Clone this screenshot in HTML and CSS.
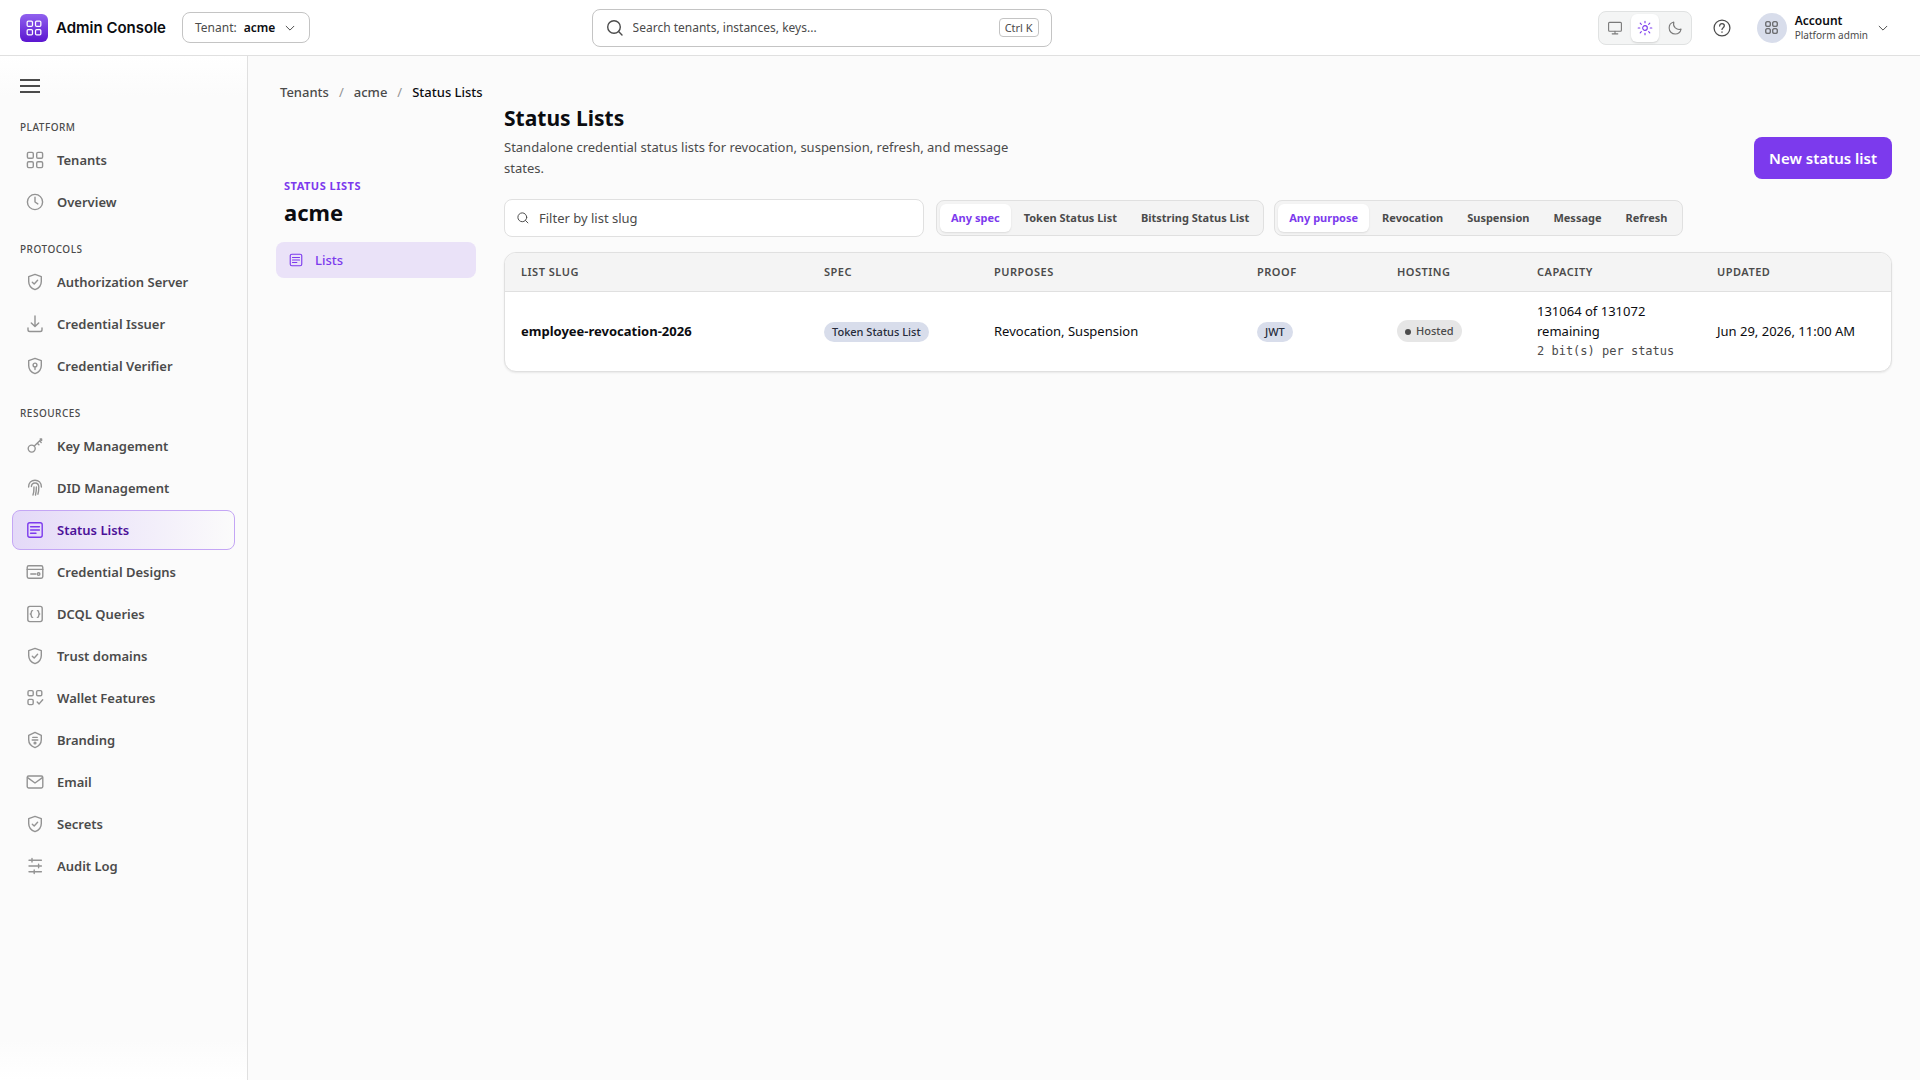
FILE: index.html
```html
<!DOCTYPE html>
<html lang="en">
<head>
    <meta charset="UTF-8">
    <meta name="viewport" content="width=device-width, initial-scale=1.0">
    <title>Status Lists - Admin Console</title>
    <link rel="stylesheet" href="styles.css">
</head>
<body>
    <!-- Icon sprite -->
    <svg class="sprite" aria-hidden="true">
        <symbol id="i-grid" viewBox="0 0 20 20"><rect x="2.4" y="2.4" width="5.9" height="5.9" rx="1.3"/><rect x="11.7" y="2.4" width="5.9" height="5.9" rx="1.3"/><rect x="2.4" y="11.7" width="5.9" height="5.9" rx="1.3"/><rect x="11.7" y="11.7" width="5.9" height="5.9" rx="1.3"/></symbol>
        <symbol id="i-clock" viewBox="0 0 20 20"><circle cx="10" cy="10" r="7.6"/><path d="M10 5.2V10l2.8 1.9"/></symbol>
        <symbol id="i-shield" viewBox="0 0 20 20"><path d="M10 2.4l6.3 2.2v4.8c0 4-2.4 6.8-6.3 8.2-3.9-1.4-6.3-4.2-6.3-8.2V4.6z"/><path d="M7.3 10.2l1.9 1.8 3.4-3.7"/></symbol>
        <symbol id="i-download" viewBox="0 0 20 20"><path d="M10 2v10.4M6.3 8.9l3.7 3.7 3.7-3.7M3 14v1.7c0 1 .8 1.8 1.8 1.8h10.4c1 0 1.8-.8 1.8-1.8V14"/></symbol>
        <symbol id="i-verify" viewBox="0 0 20 20"><path d="M10 2.4l6.3 2.2v4.8c0 4-2.4 6.8-6.3 8.2-3.9-1.4-6.3-4.2-6.3-8.2V4.6z"/><circle cx="10" cy="9" r="1.9"/><path d="M10 11v2.6"/></symbol>
        <symbol id="i-key" viewBox="0 0 20 20"><circle cx="6.7" cy="12.6" r="3.5"/><path d="M9.3 10l7-6.8M12.3 7.2l1.6 1.6M14.6 4.8l1.6 1.6M15.2 3h1.4v1.4"/></symbol>
        <symbol id="i-finger" viewBox="0 0 20 20"><path d="M3.6 9C3.6 4.8 6.4 2.2 10 2.2s6.4 2.6 6.4 6.8M6.4 8.6C6.4 6.4 7.8 5 10 5s3.8 1.600 3.800 4.200c0 3-.2 5-.9 7M8 17c.8-2.200 1-4.600 1-8M11.400 9c0 3.400-.2 5.400-.9 8"/></symbol>
        <symbol id="i-list" viewBox="0 0 20 20"><rect x="2.8" y="2.8" width="14.4" height="14.4" rx="2"/><path d="M5.6 6.8h8.8M5.6 10h8.8M5.6 13.2h5.4"/></symbol>
        <symbol id="i-card" viewBox="0 0 20 20"><rect x="2.2" y="3.8" width="15.6" height="12.4" rx="1.6"/><path d="M2.2 7.4h15.6M5.8 12h5"/><circle cx="13.6" cy="12" r="1.3"/></symbol>
        <symbol id="i-braces" viewBox="0 0 20 20"><rect x="2.8" y="2.4" width="14.4" height="15.2" rx="2"/><path d="M7.6 6.6c-1.3 0-1.3.6-1.3 1.7s-.2 1.7-1 1.7c.8 0 1 .6 1 1.7s0 1.7 1.3 1.7M12.4 6.6c1.3 0 1.3.6 1.3 1.7s.2 1.7 1 1.7c-.8 0-1 .6-1 1.7s0 1.7-1.3 1.7"/></symbol>
        <symbol id="i-features" viewBox="0 0 20 20"><rect x="3" y="2.6" width="5.2" height="5.2" rx="1.3"/><rect x="11.6" y="2.6" width="5.2" height="5.2" rx="1.3"/><rect x="3" y="11.4" width="5.2" height="5.2" rx="1.3"/><path d="M12.2 14l1.9 1.9 3.6-4.2"/></symbol>
        <symbol id="i-brand" viewBox="0 0 20 20"><path d="M10 2.4l6.3 3v4.4c0 3.8-2.4 6.4-6.3 7.8-3.9-1.4-6.3-4-6.3-7.8V5.4z"/><path d="M7.8 7.4h4.4M7.2 10h5.6"/><circle cx="10" cy="13" r=".9"/></symbol>
        <symbol id="i-mail" viewBox="0 0 20 20"><rect x="2.2" y="4" width="15.6" height="12" rx="1.4"/><path d="M2.6 5.6L10 11l7.4-5.4"/></symbol>
        <symbol id="i-sliders" viewBox="0 0 20 20"><path d="M4 4.2h12.4M4 10h12.4M4 15.8h12.4M7 2.4V6M13.6 8.2v3.6M9.2 14v3.6"/></symbol>
        <symbol id="i-search" viewBox="0 0 20 20"><circle cx="9" cy="9" r="6.3"/><path d="M13.6 13.6l3.4 3.4"/></symbol>
        <symbol id="i-chevron" viewBox="0 0 20 20"><path d="M4.5 7.5L10 13l5.5-5.5"/></symbol>
        <symbol id="i-screen" viewBox="0 0 20 20"><rect x="2" y="3" width="16" height="11" rx="1.2"/><path d="M10 14v3M6.5 17.3h7"/></symbol>
        <symbol id="i-sun" viewBox="0 0 20 20"><circle cx="10" cy="10" r="2.9"/><path d="M10 1.5v2M10 16.5v2M1.5 10h2M16.5 10h2M4 4l1.4 1.4M14.6 14.6L16 16M4 16l1.4-1.4M14.6 5.4L16 4"/></symbol>
        <symbol id="i-moon" viewBox="0 0 20 20"><path d="M8.5 2.6c-.9 3 .1 5.600 1.900 7.300 1.800 1.600 4.400 2.400 7.200 1.500-.8 3.600-3.600 6.100-7.300 6.100-4.400 0-7.600-3.300-7.600-7.500 0-3.600 2.200-6.500 5.800-7.400z"/></symbol>
        <symbol id="i-help" viewBox="0 0 20 20"><circle cx="10" cy="10" r="8.8"/><path d="M7.4 7.8c0-1.6 1.1-2.6 2.6-2.6s2.6 1 2.6 2.4c0 1.9-2.6 2.1-2.6 4M10 14.2v.6"/></symbol>
    </svg>

    <header class="topbar">
        <div class="topbar-left">
            <span class="logo"><svg class="icon"><use href="#i-grid"/></svg></span>
            <span class="product">Admin Console</span>
            <button class="tenant-btn" type="button">Tenant: <strong>acme</strong><svg class="icon"><use href="#i-chevron"/></svg></button>
        </div>
        <label class="search">
            <svg class="icon"><use href="#i-search"/></svg>
            <input type="search" aria-label="Search" placeholder="Search tenants, instances, keys...">
            <kbd>Ctrl K</kbd>
        </label>
        <div class="topbar-right">
            <div class="theme">
                <button type="button" aria-label="System theme"><svg class="icon"><use href="#i-screen"/></svg></button>
                <button type="button" aria-label="Light theme" class="active"><svg class="icon"><use href="#i-sun"/></svg></button>
                <button type="button" aria-label="Dark theme"><svg class="icon"><use href="#i-moon"/></svg></button>
            </div>
            <button class="help" type="button" aria-label="Help"><svg class="icon"><use href="#i-help"/></svg></button>
            <button class="account" type="button">
                <span class="avatar"><svg class="icon"><use href="#i-grid"/></svg></span>
                <span class="account-text"><strong>Account</strong><small>Platform admin</small></span>
                <svg class="icon chevron"><use href="#i-chevron"/></svg>
            </button>
        </div>
    </header>

    <div class="shell">
        <aside class="sidebar">
            <button class="menu-btn" type="button" aria-label="Toggle menu"><span></span><span></span><span></span></button>
            <nav>
                <h2>Platform</h2>
                <a href="#"><svg class="icon"><use href="#i-grid"/></svg>Tenants</a>
                <a href="#"><svg class="icon"><use href="#i-clock"/></svg>Overview</a>
                <h2>Protocols</h2>
                <a href="#"><svg class="icon"><use href="#i-shield"/></svg>Authorization Server</a>
                <a href="#"><svg class="icon"><use href="#i-download"/></svg>Credential Issuer</a>
                <a href="#"><svg class="icon"><use href="#i-verify"/></svg>Credential Verifier</a>
                <h2>Resources</h2>
                <a href="#"><svg class="icon"><use href="#i-key"/></svg>Key Management</a>
                <a href="#"><svg class="icon"><use href="#i-finger"/></svg>DID Management</a>
                <a href="#" class="active"><svg class="icon"><use href="#i-list"/></svg>Status Lists</a>
                <a href="#"><svg class="icon"><use href="#i-card"/></svg>Credential Designs</a>
                <a href="#"><svg class="icon"><use href="#i-braces"/></svg>DCQL Queries</a>
                <a href="#"><svg class="icon"><use href="#i-shield"/></svg>Trust domains</a>
                <a href="#"><svg class="icon"><use href="#i-features"/></svg>Wallet Features</a>
                <a href="#"><svg class="icon"><use href="#i-brand"/></svg>Branding</a>
                <a href="#"><svg class="icon"><use href="#i-mail"/></svg>Email</a>
                <a href="#"><svg class="icon"><use href="#i-shield"/></svg>Secrets</a>
                <a href="#"><svg class="icon"><use href="#i-sliders"/></svg>Audit Log</a>
            </nav>
        </aside>

        <main>
            <nav class="breadcrumb" aria-label="Breadcrumb">
                <a href="#">Tenants</a><i>/</i><a href="#">acme</a><i>/</i><span>Status Lists</span>
            </nav>
            <div class="content">
                <aside class="subnav">
                    <p class="eyebrow">Status Lists</p>
                    <h2>acme</h2>
                    <a href="#"><svg class="icon"><use href="#i-list"/></svg>Lists</a>
                </aside>
                <section class="page">
                    <div class="page-head">
                        <div class="page-title">
                            <h1>Status Lists</h1>
                            <p>Standalone credential status lists for revocation, suspension, refresh, and message states.</p>
                        </div>
                        <button class="primary" type="button">New status list</button>
                    </div>
                    <div class="filters">
                        <label class="filter-input">
                            <svg class="icon"><use href="#i-search"/></svg>
                            <input type="text" aria-label="Filter by list slug" placeholder="Filter by list slug">
                        </label>
                        <div class="segment">
                            <button type="button" class="active">Any spec</button>
                            <button type="button">Token Status List</button>
                            <button type="button">Bitstring Status List</button>
                        </div>
                        <div class="segment">
                            <button type="button" class="active">Any purpose</button>
                            <button type="button">Revocation</button>
                            <button type="button">Suspension</button>
                            <button type="button">Message</button>
                            <button type="button">Refresh</button>
                        </div>
                    </div>
                    <div class="table-card">
                        <table>
                            <thead>
                                <tr>
                                    <th class="c-slug">List slug</th>
                                    <th class="c-spec">Spec</th>
                                    <th class="c-purposes">Purposes</th>
                                    <th class="c-proof">Proof</th>
                                    <th class="c-hosting">Hosting</th>
                                    <th class="c-capacity">Capacity</th>
                                    <th class="c-updated">Updated</th>
                                </tr>
                            </thead>
                            <tbody>
                                <tr>
                                    <td class="slug">employee-revocation-2026</td>
                                    <td><span class="tag">Token Status List</span></td>
                                    <td>Revocation, Suspension</td>
                                    <td><span class="tag">JWT</span></td>
                                    <td><span class="status">Hosted</span></td>
                                    <td>131064 of 131072 remaining<code>2 bit(s) per status</code></td>
                                    <td>Jun 29, 2026, 11:00 AM</td>
                                </tr>
                            </tbody>
                        </table>
                    </div>
                </section>
            </div>
        </main>
    </div>
</body>
</html>
```
FILE: styles.css
```css
* {
    box-sizing: border-box;
}
body {
    margin: 0;
    min-height: 100vh;
    display: flex;
    flex-direction: column;
    font-family: "Segoe UI", "Noto Sans", sans-serif;
    font-size: 13px;
    line-height: 20px;
    color: #0b0c10;
    background: #fbfbfb;
}
h1, h2, p {
    margin: 0;
}
a {
    color: inherit;
    text-decoration: none;
}
button, input, kbd {
    font: inherit;
    color: inherit;
}
button {
    padding: 0;
    border: none;
    background: none;
    white-space: nowrap;
    cursor: pointer;
}
input {
    flex: 1;
    min-width: 0;
    padding: 0;
    border: none;
    outline: none;
    background: none;
}
input::placeholder {
    color: #4b4b4b;
    opacity: 1;
}
.sprite {
    display: none;
}
.icon {
    width: 20px;
    height: 20px;
    flex: none;
    fill: none;
    stroke: currentColor;
    stroke-width: 1.4;
    stroke-linecap: round;
    stroke-linejoin: round;
}

/* Top bar */
.topbar {
    display: grid;
    grid-template-columns: 15fr 460px 22fr;
    align-items: center;
    height: 56px;
    padding: 0 30px 0 20px;
    border-bottom: 1px solid #e0e0e0;
    background: #fff;
}
.topbar-left, .topbar-right {
    display: flex;
    align-items: center;
}
.topbar-right {
    justify-content: flex-end;
}
.logo {
    display: flex;
    align-items: center;
    justify-content: center;
    width: 28px;
    height: 28px;
    border-radius: 6px;
    color: #fff;
    background: linear-gradient(#9061ee, #5b16d0);
}
.logo .icon {
    width: 18px;
    height: 18px;
}
.product {
    margin: 0 16px 0 8px;
    font-family: Inter, sans-serif;
    font-size: 15px;
    font-weight: 600;
}
.tenant-btn {
    display: flex;
    align-items: center;
    height: 31px;
    padding: 0 12px;
    border: 1px solid #c4c4c4;
    border-radius: 8px;
    font-size: 12px;
    color: #4b4b4b;
}
.tenant-btn strong {
    margin: 0 8px 0 7px;
    font-weight: 600;
    color: #0b0c10;
}
.tenant-btn .icon, .account .chevron {
    width: 14px;
    height: 14px;
}
.search {
    display: flex;
    align-items: center;
    gap: 8px;
    height: 38px;
    padding: 0 12px;
    border: 1px solid #c4c4c4;
    border-radius: 8px;
    font-size: 12px;
    color: #4b4b4b;
}
kbd {
    padding: 0 5px;
    border: 1px solid #c4c4c4;
    border-radius: 4px;
    font-size: 11px;
    line-height: 17px;
}
.theme {
    display: flex;
    gap: 2px;
    padding: 2px;
    border: 1px solid #e0e2e2;
    border-radius: 8px;
    background: #f4f5f5;
    color: #7a7a7a;
}
.theme button {
    display: flex;
    align-items: center;
    justify-content: center;
    width: 28px;
    height: 28px;
    border-radius: 6px;
}
.theme .icon {
    width: 16px;
    height: 16px;
}
.theme .active {
    color: #7c3aed;
    background: #fff;
    box-shadow: 0 1px 2px rgba(0, 0, 0, 0.15);
}
.help {
    display: flex;
    margin: 0 26px 0 21px;
    color: #4b4b4b;
}
.help .icon {
    width: 18px;
    height: 18px;
}
.account {
    display: flex;
    align-items: center;
    gap: 8px;
    text-align: left;
    color: #4b4b4b;
}
.avatar {
    display: flex;
    align-items: center;
    justify-content: center;
    width: 30px;
    height: 30px;
    border-radius: 50%;
    background: #d8ddeb;
}
.avatar .icon {
    width: 15px;
    height: 15px;
}
.account-text strong, .account-text small {
    display: block;
    line-height: 15px;
}
.account-text strong {
    font-size: 12px;
    font-weight: 600;
    color: #0b0c10;
}
.account-text small {
    font-size: 10px;
}

/* Sidebar */
.shell {
    display: flex;
    flex: 1;
}
.sidebar {
    flex: none;
    width: 248px;
    padding: 20px 12px;
    border-right: 1px solid #e0e0e0;
    background: linear-gradient(#fff, #fbfbfb 40px, #fbfbfb calc(100% - 40px), #fff);
}
.menu-btn {
    display: flex;
    flex-direction: column;
    gap: 4px;
    margin: 3px 8px 0;
}
.menu-btn span {
    width: 20px;
    height: 2px;
    background: #4b4b4b;
}
.sidebar h2 {
    margin: 17px 8px 3px;
    font-size: 10px;
    font-weight: 500;
    letter-spacing: 0.5px;
    text-transform: uppercase;
    color: #4b4b4b;
}
.sidebar h2:first-child {
    margin-top: 24px;
}
.sidebar a {
    display: flex;
    align-items: center;
    gap: 12px;
    height: 40px;
    margin-bottom: 2px;
    padding: 0 12px;
    border: 1px solid transparent;
    border-radius: 8px;
    font-weight: 600;
    color: #4b4b4b;
}
.sidebar a .icon {
    color: #939393;
}
.sidebar a.active {
    border-color: #c4a6f5;
    color: #4c1199;
    background: linear-gradient(90deg, #e4d9f8, #fbfbfb);
}
.sidebar a.active .icon {
    color: #7c3aed;
}

/* Main */
main {
    flex: 1;
    min-width: 0;
    padding: 26px 28px;
}
.breadcrumb {
    display: flex;
    gap: 10px;
    padding: 0 4px;
    font-weight: 500;
    color: #4b4b4b;
}
.breadcrumb i {
    font-style: normal;
    font-weight: 400;
    color: #939393;
}
.breadcrumb span {
    color: #0b0c10;
}
.content {
    display: flex;
    gap: 28px;
}
.subnav {
    flex: none;
    width: 200px;
    padding-top: 74px;
}
.eyebrow {
    padding: 0 8px;
    font-size: 11px;
    font-weight: 700;
    letter-spacing: 0.5px;
    text-transform: uppercase;
    color: #7c3aed;
}
.subnav h2 {
    margin-bottom: 14px;
    padding: 0 8px;
    font-size: 22px;
    line-height: 32px;
}
.subnav a {
    display: flex;
    align-items: center;
    gap: 11px;
    height: 36px;
    padding: 0 12px;
    border-radius: 8px;
    font-weight: 500;
    color: #7c3aed;
    background: #eae2f8;
}
.subnav a .icon {
    width: 16px;
    height: 16px;
}
.page {
    flex: 1;
    min-width: 0;
}
.page-head {
    display: flex;
    align-items: flex-end;
    justify-content: space-between;
    margin-bottom: 20px;
}
.page-title {
    max-width: 520px;
}
h1 {
    margin-bottom: 3px;
    font-size: 21px;
    line-height: 32px;
}
.page-title p {
    line-height: 21px;
    color: #4b4b4b;
}
.primary {
    height: 42px;
    padding: 0 15px;
    border-radius: 8px;
    font-size: 15px;
    font-weight: 600;
    color: #fff;
    background: #7c3aed;
}
.filters {
    display: flex;
    align-items: center;
    gap: 10px;
    margin-bottom: 15px;
}
.filter-input {
    display: flex;
    align-items: center;
    gap: 9px;
    width: 420px;
    height: 38px;
    margin-right: 2px;
    padding: 0 11px;
    border: 1px solid #e0e0e0;
    border-radius: 8px;
    color: #4b4b4b;
    background: #fff;
}
.filter-input .icon {
    width: 14px;
    height: 14px;
}
.segment {
    display: flex;
    gap: 2px;
    padding: 3px;
    border: 1px solid #e0e0e0;
    border-radius: 8px;
    background: #f4f4f4;
}
.segment button {
    height: 28px;
    padding: 0 11px;
    border-radius: 6px;
    font-size: 11px;
    font-weight: 700;
    color: #4b4b4b;
}
.segment .active {
    color: #7c3aed;
    background: #fff;
    box-shadow: 0 1px 2px rgba(0, 0, 0, 0.1);
}

/* Table */
.table-card {
    overflow: hidden;
    border: 1px solid #e0e0e0;
    border-radius: 12px;
    background: #fff;
    box-shadow: 0 1px 2px rgba(0, 0, 0, 0.08);
}
table {
    width: 100%;
    table-layout: fixed;
    border-collapse: collapse;
}
th, td {
    padding: 0 16px;
    text-align: left;
}
th {
    height: 38px;
    border-bottom: 1px solid #e0e0e0;
    font-size: 11px;
    font-weight: 600;
    letter-spacing: 0.5px;
    text-transform: uppercase;
    color: #4b4b4b;
    background: #f4f4f4;
}
td {
    height: 80px;
    line-height: 20px;
}
.c-slug { width: 303px; }
.c-spec { width: 170px; }
.c-purposes { width: 263px; }
.c-proof { width: 140px; }
.c-hosting { width: 140px; }
.c-capacity { width: 180px; }
.c-updated { width: 190px; }
.slug {
    font-weight: 700;
}
.tag, .status {
    display: inline-block;
    padding: 0 8px;
    border-radius: 12px;
    font-size: 11px;
    font-weight: 500;
    white-space: nowrap;
}
.tag {
    color: #262b3a;
    background: #d8ddeb;
}
.status {
    line-height: 22px;
    color: #4b4b4b;
    background: #e6e6e6;
}
.status::before {
    content: "";
    display: inline-block;
    width: 6px;
    height: 6px;
    margin-right: 5px;
    border-radius: 50%;
    background: #4b4b4b;
}
td code {
    display: block;
    font-family: "DejaVu Sans Mono", monospace;
    font-size: 12px;
    color: #4b4b4b;
}
```
